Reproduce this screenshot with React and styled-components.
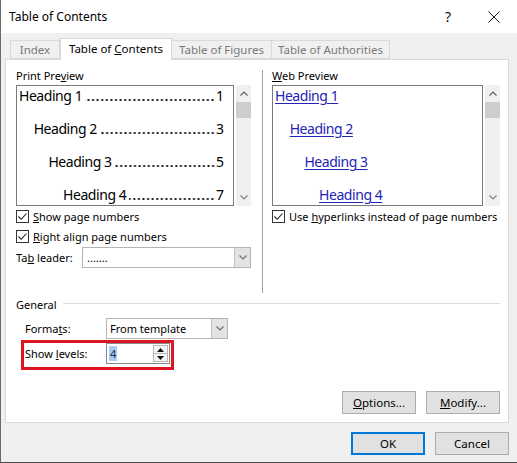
import React from "react";
import styled, { createGlobalStyle } from "styled-components";

const Global = createGlobalStyle`
  html, body { margin: 0; padding: 0; background: #f0f0f0; }
  body { font-family: "Noto Sans", "Open Sans", sans-serif; font-size: 11px; color: #000; }
  * { box-sizing: border-box; }
`;

const Window = styled.div`
  width: 517px;
  height: 463px;
  background: #f0f0f0;
  border-left: 1px solid #6b6b6b;
  border-bottom: 1px solid #4a4a4a;
  display: flex;
  flex-direction: column;
`;

const TitleBar = styled.div`
  height: 33px;
  background: #fff;
  display: flex;
  align-items: center;
  padding-left: 8px;
  font-size: 12px;
`;

const Title = styled.div`
  flex: 1;
`;

const TitleButton = styled.div`
  width: 46px;
  height: 33px;
  display: flex;
  align-items: center;
  justify-content: center;
  font-size: 14px;
  color: #111;
`;

const Body = styled.div`
  flex: 1;
  display: flex;
  flex-direction: column;
  padding: 0 8px 0 4px;
`;

const TabStrip = styled.div`
  height: 26px;
  display: flex;
  align-items: flex-end;
  padding-left: 5px;
  position: relative;
  z-index: 1;
`;

const Tab = styled.div`
  width: ${(p) => p.$w}px;
  height: ${(p) => (p.$active ? 22 : 19)}px;
  margin-bottom: ${(p) => (p.$active ? -1 : 0)}px;
  background: ${(p) => (p.$active ? "#fff" : "#f0f0f0")};
  border: 1px solid #d9d9d9;
  border-bottom: ${(p) => (p.$active ? "none" : "1px solid #d9d9d9")};
  border-left: ${(p) => (p.$first || p.$active ? "1px solid #d9d9d9" : "none")};
  color: ${(p) => (p.$active ? "#000" : "#7a7a7a")};
  font-size: 11.5px;
  display: flex;
  align-items: center;
  justify-content: center;
  padding-bottom: ${(p) => (p.$active ? 2 : 0)}px;
  white-space: pre;
`;

const Panel = styled.div`
  height: 364px;
  background: #fff;
  border: 1px solid #d9d9d9;
  padding: 8px 8px 8px 10px;
  display: flex;
  flex-direction: column;
`;

const TopSection = styled.div`
  height: 225px;
  display: flex;
`;

const Column = styled.div`
  width: ${(p) => p.$w}px;
  display: flex;
  flex-direction: column;
`;

const Separator = styled.div`
  width: 1px;
  background: #a0a0a0;
  margin: 2px 9px 0 11px;
`;

const Label = styled.div`
  height: 16px;
  line-height: 16px;
  white-space: nowrap;
`;

const PreviewRow = styled.div`
  margin-top: 1px;
  height: 121px;
  display: flex;
  gap: 2px;
`;

const PreviewBox = styled.div`
  flex: 1;
  border: 1px solid #7a7a7a;
  overflow: hidden;
  display: flex;
  flex-direction: column;
  gap: 13.5px;
  padding-right: 9px;
  font-size: 14px;
`;

const PreviewLine = styled.div`
  height: 20px;
  line-height: 19px;
  display: flex;
  padding-left: ${(p) => 2 + p.$level * 14.7}px;
  white-space: nowrap;
`;

const HeadingText = styled.span`
  letter-spacing: -0.45px;
`;

// dot leader drawn as a repeating dot pattern, anchored to the page number
const Leader = styled.span`
  flex: 1;
  margin: 0 1px 0 3px;
  background-image: radial-gradient(circle, #111 0.9px, transparent 1.2px);
  background-size: 4.6px 4px;
  background-repeat: repeat-x;
  background-position: right 0 bottom 4px;
`;

const Link = styled.span`
  color: #2323b4;
  letter-spacing: -0.45px;
  text-decoration: underline;
  text-underline-offset: 2px;
`;

const Scrollbar = styled.div`
  width: 15px;
  background: #f0f0f0;
  display: flex;
  flex-direction: column;
  align-items: center;
`;

const ScrollArrow = styled.div`
  height: 17px;
  width: 15px;
  display: flex;
  align-items: center;
  justify-content: center;
`;

const ScrollSpace = styled.div`
  flex: 1;
`;

const Thumb = styled.div`
  width: 15px;
  height: 16px;
  background: #cdcdcd;
`;

const CheckRow = styled.div`
  margin-top: ${(p) => p.$mt}px;
  height: 16px;
  display: flex;
  align-items: center;
  gap: 4px;
  white-space: pre;
`;

const Box = styled.div`
  width: 13px;
  height: 13px;
  border: 1px solid #333;
  background: #fff;
  display: flex;
  align-items: center;
  justify-content: center;
`;

const FieldRow = styled.div`
  margin-top: ${(p) => p.$mt || 0}px;
  height: 21px;
  display: flex;
  align-items: center;
  padding-left: ${(p) => p.$pl || 0}px;
`;

const FieldLabel = styled.div`
  width: ${(p) => p.$w}px;
  white-space: pre;
`;

const Select = styled.div`
  width: ${(p) => p.$w}px;
  height: 21px;
  border: 1px solid #b4b4b4;
  background: #fff;
  display: flex;
  align-items: stretch;
`;

const SelectValue = styled.div`
  flex: 1;
  display: flex;
  align-items: center;
  padding-left: ${(p) => p.$pl || 3}px;
  white-space: nowrap;
`;

const SelectArrow = styled.div`
  width: 16px;
  background: #e3e3e3;
  border-left: 1px solid #c2c2c2;
  display: flex;
  align-items: center;
  justify-content: center;
`;

const GeneralHeader = styled.div`
  margin-top: 3px;
  height: 16px;
  display: flex;
  align-items: center;
  gap: 6px;
`;

const Rule = styled.div`
  flex: 1;
  height: 1px;
  background: #dcdcdc;
  margin-top: -1px;
`;

const Highlight = styled.div`
  margin: 1px 0 0 5px;
  width: 153px;
  height: 30px;
  border: 3px solid #dc1520;
  padding: 0 0 3px 1px;
  display: flex;
  align-items: flex-start;
`;

const Spinner = styled.div`
  width: 64px;
  height: 21px;
  border: 1px solid #8a8a8a;
  background: #fff;
  display: flex;
`;

const SpinValue = styled.div`
  flex: 1;
  display: flex;
  align-items: center;
  padding-left: 2px;
`;

const Selected = styled.span`
  background: #a9cdf0;
  color: #1b2a55;
  padding: 0 1px;
  line-height: 15px;
`;

const SpinButtons = styled.div`
  width: 15px;
  margin: 1px 1px 1px 0;
  display: flex;
  flex-direction: column;
  border: 1px solid #b8b8b8;
  background: #f4f4f4;
`;

const SpinHalf = styled.div`
  flex: 1;
  display: flex;
  align-items: center;
  justify-content: center;
  & + & { border-top: 1px solid #b8b8b8; }
`;

const ButtonRow = styled.div`
  margin-top: auto;
  display: flex;
  justify-content: flex-end;
  gap: 10px;
`;

const Button = styled.div`
  width: 74px;
  height: 23px;
  background: #e1e1e1;
  border: ${(p) => (p.$default ? "2px solid #0078d7" : "1px solid #adadad")};
  font-size: 11.5px;
  display: flex;
  align-items: center;
  justify-content: center;
  white-space: pre;
`;

const Footer = styled.div`
  padding-top: 9px;
  display: flex;
  justify-content: flex-end;
  gap: 10px;
`;

const Chevron = ({ up, color = "#606060" }) => (
  <svg width="8" height="5" viewBox="0 0 8 5">
    <polyline
      points={up ? "0.5,4.5 4,1 7.5,4.5" : "0.5,0.5 4,4 7.5,0.5"}
      fill="none"
      stroke={color}
      strokeWidth="1.2"
    />
  </svg>
);

const Check = () => (
  <svg width="11" height="11" viewBox="0 0 11 11">
    <polyline points="1.5,5.5 4.2,8.3 9.5,2.5" fill="none" stroke="#222" strokeWidth="1.1" />
  </svg>
);

const Tri = ({ up }) => (
  <svg width="7" height="4" viewBox="0 0 7 4">
    <polygon points={up ? "0,4 3.5,0 7,4" : "0,0 3.5,4 7,0"} fill="#111" />
  </svg>
);

const ScrollBar = () => (
  <Scrollbar>
    <ScrollArrow>
      <Chevron up />
    </ScrollArrow>
    <Thumb />
    <ScrollSpace />
    <ScrollArrow>
      <Chevron color="#808080" />
    </ScrollArrow>
  </Scrollbar>
);

const headings = [
  { name: "Heading 1", page: 1 },
  { name: "Heading 2", page: 3 },
  { name: "Heading 3", page: 5 },
  { name: "Heading 4", page: 7 },
];

export default function App() {
  return (
    <>
      <Global />
      <Window>
        <TitleBar>
          <Title>Table of Contents</Title>
          <TitleButton>?</TitleButton>
          <TitleButton>
            <svg width="12" height="12" viewBox="0 0 12 12">
              <path d="M0.5 0.5 L11.5 11.5 M11.5 0.5 L0.5 11.5" stroke="#111" strokeWidth="1" />
            </svg>
          </TitleButton>
        </TitleBar>
        <Body>
          <TabStrip>
            <Tab $w={50} $first>Index</Tab>
            <Tab $w={112} $active>
              <span>
                Table of <u>C</u>ontents
              </span>
            </Tab>
            <Tab $w={100}>Table of Figures</Tab>
            <Tab $w={118}>Table of Authorities</Tab>
          </TabStrip>
          <Panel>
            <TopSection>
              <Column $w={235}>
                <Label>
                  Print Pre<u>v</u>iew
                </Label>
                <PreviewRow>
                  <PreviewBox>
                    {headings.map((h, i) => (
                      <PreviewLine key={h.name} $level={i}>
                        <HeadingText>{h.name}</HeadingText>
                        <Leader />
                        <span>{h.page}</span>
                      </PreviewLine>
                    ))}
                  </PreviewBox>
                  <ScrollBar />
                </PreviewRow>
                <CheckRow $mt={2}>
                  <Box>
                    <Check />
                  </Box>
                  <span>
                    <u>S</u>how page numbers
                  </span>
                </CheckRow>
                <CheckRow $mt={4}>
                  <Box>
                    <Check />
                  </Box>
                  <span>
                    <u>R</u>ight align page numbers
                  </span>
                </CheckRow>
                <FieldRow $mt={3}>
                  <FieldLabel $w={66}>
                    <span>
                      Ta<u>b</u> leader:
                    </span>
                  </FieldLabel>
                  <Select $w={169}>
                    <SelectValue $pl={4}>.......</SelectValue>
                    <SelectArrow>
                      <Chevron color="#707070" />
                    </SelectArrow>
                  </Select>
                </FieldRow>
              </Column>
              <Separator />
              <Column $w={228}>
                <Label>
                  <u>W</u>eb Preview
                </Label>
                <PreviewRow>
                  <PreviewBox>
                    {headings.map((h, i) => (
                      <PreviewLine key={h.name} $level={i}>
                        <Link>{h.name}</Link>
                      </PreviewLine>
                    ))}
                  </PreviewBox>
                  <ScrollBar />
                </PreviewRow>
                <CheckRow $mt={2}>
                  <Box>
                    <Check />
                  </Box>
                  <span>
                    Use <u>h</u>yperlinks instead of page numbers
                  </span>
                </CheckRow>
              </Column>
            </TopSection>
            <GeneralHeader>
              <span>General</span>
              <Rule />
            </GeneralHeader>
            <FieldRow $mt={6} $pl={9}>
              <FieldLabel $w={81}>
                <span>
                  Forma<u>t</u>s:
                </span>
              </FieldLabel>
              <Select $w={122}>
                <SelectValue>From template</SelectValue>
                <SelectArrow>
                  <Chevron color="#707070" />
                </SelectArrow>
              </Select>
            </FieldRow>
            <Highlight>
              <FieldRow>
                <FieldLabel $w={81}>
                  <span>
                    Show <u>l</u>evels:
                  </span>
                </FieldLabel>
                <Spinner>
                  <SpinValue>
                    <Selected>4</Selected>
                  </SpinValue>
                  <SpinButtons>
                    <SpinHalf>
                      <Tri up />
                    </SpinHalf>
                    <SpinHalf>
                      <Tri />
                    </SpinHalf>
                  </SpinButtons>
                </Spinner>
              </FieldRow>
            </Highlight>
            <ButtonRow>
              <Button>
                <span>
                  <u>O</u>ptions...
                </span>
              </Button>
              <Button>
                <span>
                  <u>M</u>odify...
                </span>
              </Button>
            </ButtonRow>
          </Panel>
          <Footer>
            <Button $default>OK</Button>
            <Button>Cancel</Button>
          </Footer>
        </Body>
      </Window>
    </>
  );
}
